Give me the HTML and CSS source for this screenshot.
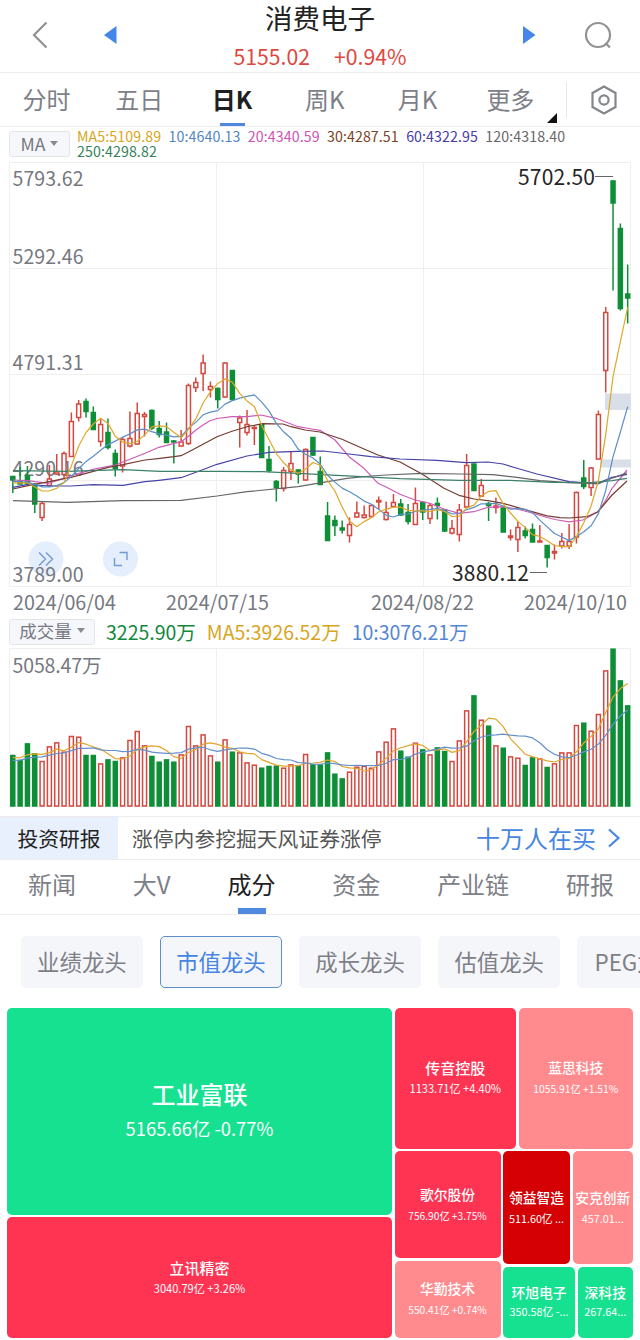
FILE: index.html
```html
<!DOCTYPE html>
<html lang="zh-CN">
<head>
    <meta charset="UTF-8">
    <meta name="viewport" content="width=device-width, initial-scale=1.0">
    <title>消费电子</title>
    <link rel="stylesheet" href="styles.css">
</head>
<body>
    <header class="header">
        <svg class="icon-back" width="20" height="30" viewBox="0 0 20 30"><path d="M16.500 2.500 4 15l12.500 12.500"/></svg>
        <svg class="icon-prev" width="14" height="20" viewBox="0 0 14 20"><path d="M13.500 1v18L1 10z"/></svg>
        <div class="header-title">
            <h1>消费电子</h1>
            <div class="quote"><span>5155.02</span><span>+0.94%</span></div>
        </div>
        <svg class="icon-next" width="14" height="20" viewBox="0 0 14 20"><path d="M0 1v18l12.500-9z"/></svg>
        <svg class="icon-search" width="30" height="30" viewBox="0 0 30 30"><circle cx="15" cy="15" r="12"/><path d="m22.500 23 4.500 4.500"/></svg>
    </header>

    <nav class="period-tabs">
        <a>分时</a>
        <a>五日</a>
        <a class="active">日K</a>
        <a>周K</a>
        <a>月K</a>
        <a class="more">更多</a>
        <div class="settings">
            <svg width="30" height="32" viewBox="0 0 30 32"><path d="M15 2.500 26.500 9v14L15 29.500 3.500 23V9z"/><circle cx="15" cy="16" r="4.600"/></svg>
        </div>
    </nav>

    <div class="ma-row">
        <button class="select">MA<i></i></button>
        <div class="ma-legend">
            <span class="ma5">MA5:5109.89</span>
            <span class="ma10">10:4640.13</span>
            <span class="ma20">20:4340.59</span>
            <span class="ma30">30:4287.51</span>
            <span class="ma60">60:4322.95</span>
            <span class="ma120">120:4318.40</span>
            <span class="ma250">250:4298.82</span>
        </div>
    </div>

    <svg class="chart" width="640" height="430" viewBox="0 160 640 430">
        <path class="grid" d="M9.500 162.500h621v424h-621zM9.500 268.500h621M9.500 374.500h621M9.500 480.500h621M216.500 162.500v424M423.500 162.500v424"/>
        <rect class="gap-zone" x="605" y="393.500" width="26" height="16.500"/>
        <rect class="gap-zone" x="600" y="459.500" width="31" height="8"/>
        <circle class="tool" cx="46" cy="559" r="17.500"/>
        <circle class="tool" cx="120.500" cy="559" r="17.500"/>
        <path class="tool-icon" d="m39 552.500 6.500 6.500-6.500 6.500m7-13 6.500 6.500-6.500 6.500M119.500 552.500h7.500v7.500M114.500 558v7.500h7.500"/>
        <g class="axis-label">
            <text x="12.500" y="185.500" textLength="71">5793.62</text>
            <text x="12.500" y="263.500" textLength="71">5292.46</text>
            <text x="12.500" y="369.500" textLength="71">4791.31</text>
            <text x="12.500" y="475.500" textLength="71">4290.16</text>
            <text x="12.500" y="581.500" textLength="71">3789.00</text>
        </g>
        <g id="candles"></g>
        <g id="maLines"></g>
        <g class="extreme">
            <text x="518" y="184.500" textLength="77">5702.50</text>
            <text x="452" y="580.500" textLength="77">3880.12</text>
            <path d="M595 176.500h18M530 572.500h17"/>
        </g>
    </svg>

    <div class="dates">
        <span>2024/06/04</span>
        <span>2024/07/15</span>
        <span>2024/08/22</span>
        <span>2024/10/10</span>
    </div>

    <div class="vol-row">
        <button class="select">成交量<i></i></button>
        <span class="vol-now">3225.90万</span>
        <span class="ma5">MA5:3926.52万</span>
        <span class="ma10">10:3076.21万</span>
    </div>

    <svg class="volume" width="640" height="169" viewBox="0 647 640 169">
        <path class="grid" d="M9.500 648.500h621v158h-621zM216.500 648.500v158M423.500 648.500v158"/>
        <g class="axis-label"><text x="12.500" y="672.500" textLength="89">5058.47万</text></g>
        <g id="volBars"></g>
        <g id="volLines"></g>
    </svg>

    <div class="report">
        <div class="report-tag">投资研报</div>
        <div class="report-text">涨停内参挖掘天风证券涨停</div>
        <div class="report-link">
            十万人在买
            <svg width="14" height="20" viewBox="0 0 14 20"><path d="m2 1.500 9.500 8.500L2 18.500"/></svg>
        </div>
    </div>

    <nav class="info-tabs">
        <a>新闻</a>
        <a>大V</a>
        <a class="active">成分</a>
        <a>资金</a>
        <a>产业链</a>
        <a>研报</a>
    </nav>

    <div class="chips">
        <div class="chip">业绩龙头</div>
        <div class="chip selected">市值龙头</div>
        <div class="chip">成长龙头</div>
        <div class="chip">估值龙头</div>
        <div class="chip">PEG龙头</div>
    </div>

    <div class="treemap">
        <div class="col col-left">
            <div class="tile green big"><b>工业富联</b><span>5165.66亿 -0.77%</span></div>
            <div class="tile red luxshare"><b>立讯精密</b><span>3040.79亿 +3.26%</span></div>
        </div>
        <div class="col col-right">
            <div class="row row-top">
                <div class="tile red chuanyin"><b>传音控股</b><span>1133.71亿 +4.40%</span></div>
                <div class="tile pink lansi"><b>蓝思科技</b><span>1055.91亿 +1.51%</span></div>
            </div>
            <div class="row row-bottom">
                <div class="col col-goer">
                    <div class="tile red goer"><b>歌尔股份</b><span>756.90亿 +3.75%</span></div>
                    <div class="tile pink huaqin"><b>华勤技术</b><span>550.41亿 +0.74%</span></div>
                </div>
                <div class="col col-rest">
                    <div class="row row-mid">
                        <div class="tile dark lingyi"><b>领益智造</b><span>511.60亿 ...</span></div>
                        <div class="tile pink anker"><b>安克创新</b><span>457.01...</span></div>
                    </div>
                    <div class="row row-last">
                        <div class="tile green huanxu"><b>环旭电子</b><span>350.58亿 -...</span></div>
                        <div class="tile green shenkeji"><b>深科技</b><span>267.64...</span></div>
                    </div>
                </div>
            </div>
        </div>
    </div>

    <script src="script.js"></script>
</body>
</html>
```

FILE: styles.css
```css
* {
    box-sizing: border-box;
}
body {
    width: 640px;
    height: 1340px;
    margin: 0;
    overflow: hidden;
    background: #fff;
    color: #222;
    font-family: "Noto Sans CJK SC", sans-serif;
}
svg {
    display: block;
    flex: none;
}
.header {
    height: 73px;
    display: flex;
    align-items: flex-start;
    padding: 0 27px 0 30px;
    border-bottom: 1px solid #ececee;
}
.icon-back, .icon-search {
    margin-top: 20px;
    fill: none;
    stroke: #929292;
    stroke-width: 2.2;
}
.icon-prev, .icon-next {
    margin-top: 25px;
    fill: #4586ea;
}
.icon-prev {
    margin-left: 53px;
}
.icon-search {
    margin-left: 46px;
}
.header-title {
    flex: 1;
    text-align: center;
}
.header-title h1 {
    margin: 0;
    font-size: 27.5px;
    font-weight: 400;
    line-height: 35px;
}
.quote {
    display: flex;
    justify-content: center;
    gap: 24px;
    color: #dd4840;
    font-size: 21.2px;
    line-height: 42px;
}
.period-tabs {
    height: 54px;
    display: flex;
    align-items: center;
    border-bottom: 1px solid #ececee;
    color: #7d8087;
    font-size: 24px;
}
.period-tabs a {
    position: relative;
    width: 92.8px;
    height: 53px;
    line-height: 51px;
    text-align: center;
}
.period-tabs .active {
    color: #1f1f1f;
    font-weight: 700;
}
.period-tabs .active::after {
    content: "";
    position: absolute;
    left: 34px;
    bottom: 0;
    width: 25px;
    height: 3px;
    background: #5089df;
}
.period-tabs .more::after {
    content: "";
    position: absolute;
    right: 0;
    bottom: 3px;
    border-left: 10px solid transparent;
    border-bottom: 10px solid #111;
}
.settings {
    height: 36px;
    margin-left: 9px;
    padding: 2px 0 0 22px;
    border-left: 1px solid #e6e6ea;
}
.settings svg {
    fill: none;
    stroke: #83868b;
    stroke-width: 2.2;
}
.ma-row {
    height: 33px;
    display: flex;
    padding: 2px 0 0 9px;
}
.select {
    display: flex;
    align-items: center;
    justify-content: center;
    gap: 5px;
    padding: 0 0 2px;
    border: 1px solid #e2e4ea;
    border-radius: 3px;
    background: #f6f7fb;
    color: #767983;
    font-family: inherit;
}
.select i {
    border: 4.5px solid transparent;
    border-top: 5px solid #888b93;
    border-bottom: 0;
}
.ma-row .select {
    width: 61px;
    height: 26px;
    margin-top: 2px;
    font-size: 17.5px;
}
.ma-legend {
    flex: 1;
    display: flex;
    flex-wrap: wrap;
    align-content: flex-start;
    gap: 0 7.3px;
    padding-left: 7px;
    font-size: 14.2px;
    letter-spacing: 0.1px;
    line-height: 14.5px;
}
.ma5 { color: #d9a521; }
.ma10 { color: #4f86c6; }
.ma20 { color: #cf53b4; }
.ma30 { color: #7b4327; }
.ma60 { color: #473ba6; }
.ma120 { color: #686868; }
.ma250 { color: #35835a; }
.grid {
    fill: none;
    stroke: #efeff0;
}
.gap-zone {
    fill: #d8dfe8;
}
.tool {
    fill: #e4eefc;
}
.tool-icon {
    fill: none;
    stroke: #6f9bd2;
    stroke-width: 1.4;
}
.axis-label {
    fill: #767880;
    font-size: 19.5px;
}
.extreme {
    fill: #262626;
    font-size: 21px;
}
.extreme path {
    stroke: #666;
}
.up {
    fill: #fff;
    stroke: #d5473f;
    stroke-width: 1.5;
}
.down {
    fill: #0e8f37;
    stroke: #0e8f37;
    stroke-width: 1.5;
}
.line {
    fill: none;
    stroke-width: 1.2;
    stroke-linejoin: round;
}
.dates {
    height: 26px;
    display: flex;
    padding-left: 13px;
    color: #767880;
    font-size: 19.7px;
    line-height: 24px;
}
.dates span {
    flex: none;
    width: 153px;
}
.dates span:nth-child(2) {
    width: 205px;
}
.dates span:last-child {
    width: auto;
}
.vol-row {
    height: 31px;
    display: flex;
    align-items: center;
    gap: 11px;
    padding-left: 9px;
    font-size: 19.5px;
    line-height: 31px;
}
.vol-row .select {
    width: 86px;
    height: 26px;
    font-size: 17.5px;
}
.vol-now {
    color: #12883d;
}
.vol-row .ma10 {
    color: #5586d2;
}
.report {
    height: 44px;
    display: flex;
    align-items: center;
    border-top: 1px solid #ececf0;
    border-bottom: 1px solid #ececf0;
    font-size: 20.8px;
    line-height: 42px;
}
.report-tag {
    width: 118px;
    background: #e7f0fc;
    text-align: center;
    color: #222;
}
.report-text {
    flex: 1;
    padding-left: 14px;
    color: #555;
}
.report-link {
    display: flex;
    align-items: center;
    gap: 11px;
    padding-right: 19px;
    color: #4785e2;
    font-size: 24px;
    line-height: 40px;
}
.report-link svg {
    fill: none;
    stroke: #4785e2;
    stroke-width: 2.2;
}
.info-tabs {
    height: 55px;
    display: flex;
    justify-content: space-between;
    padding: 0 26px 0 28px;
    border-bottom: 1px solid #ececef;
    color: #7d8087;
    font-size: 24px;
    line-height: 48px;
}
.info-tabs a {
    position: relative;
}
.info-tabs .active {
    color: #222;
}
.info-tabs .active::after {
    content: "";
    position: absolute;
    left: 11px;
    bottom: 0;
    width: 28px;
    height: 6px;
    background: #5089e0;
}
.chips {
    display: flex;
    gap: 17.3px;
    padding: 20.5px 0 20px 21px;
    overflow: hidden;
}
.chip {
    flex: none;
    width: 121.8px;
    height: 52px;
    border: 1px solid #f5f6fa;
    border-radius: 5px;
    background: #f5f6fa;
    color: #7d8087;
    font-size: 22.4px;
    line-height: 48px;
    text-align: center;
}
.chip.selected {
    border-color: #5a8fca;
    color: #4785e2;
}
.treemap {
    height: 330.5px;
    display: flex;
    gap: 2.5px;
    padding: 0 7px 0 7px;
}
.row, .col {
    display: flex;
    gap: 2.5px;
}
.col {
    flex-direction: column;
}
.col-left { width: 385px; }
.col-right { flex: 1; }
.row-top { height: 141px; }
.row-bottom { flex: 1; }
.col-goer { width: 106px; }
.col-rest { flex: 1; }
.row-mid { height: 113px; }
.row-last { flex: 1; }
.tile {
    flex: 1;
    display: flex;
    flex-direction: column;
    align-items: center;
    justify-content: center;
    min-width: 0;
    border-radius: 5px;
    color: #fff;
    font-size: 10.8px;
    line-height: 21px;
    white-space: nowrap;
    overflow: hidden;
}
.tile b {
    font-size: 13.8px;
    font-weight: 500;
}
.green { background: #16e191; }
.red { background: #ff3352; }
.pink { background: #ff8b8e; }
.dark { background: #d40003; }
.big {
    flex: none;
    height: 207px;
    font-size: 18.4px;
    line-height: 35px;
}
.big b {
    font-size: 24px;
}
.luxshare, .chuanyin {
    font-size: 11.1px;
}
.luxshare b, .chuanyin b {
    font-size: 15px;
}
.chuanyin { flex: none; width: 121.5px; }
.lansi { font-size: 10.3px; }
.goer { flex: none; height: 107px; font-size: 10.2px; }
.huaqin { font-size: 10.2px; }
.lingyi { flex: none; width: 67px; }
.huanxu { flex: none; width: 72px; }
.huanxu, .shenkeji { line-height: 19px; }
```

FILE: script.js
```javascript
// [direction, high, low, body top, body bottom] in chart units, one per trading day
const candles = [
    ['g', 476.5, 493, 476.5, 480], ['g', 467, 484, 481, 484], ['g', 466, 485, 476, 483.5], ['g', 483, 513, 484.5, 504],
    ['r', 501.5, 521, 503.5, 517.5], ['r', 465, 487, 479, 485.5], ['r', 454, 475, 472, 474], ['r', 451.5, 478, 453.5, 474.5],
    ['r', 412.5, 457, 421.5, 456.5], ['r', 400, 421.5, 404, 417.5], ['g', 398.5, 417.5, 401.5, 411.5], ['g', 406.5, 429.5, 412.5, 429.5],
    ['r', 418.5, 446.5, 424.5, 441.5], ['g', 418.5, 449.5, 432.5, 447.5], ['g', 449.5, 476.5, 453.5, 468.5], ['r', 437, 472.5, 439.5, 466],
    ['r', 411.5, 447.5, 438.5, 446], ['r', 402.5, 444.5, 413.5, 444], ['r', 412, 436.5, 414.5, 416.5], ['g', 409.5, 430, 410.5, 428],
    ['g', 421, 437.5, 428.5, 434.5], ['g', 422.5, 442.5, 432, 442.5], ['g', 440, 463.5, 441, 442], ['r', 430, 446.5, 442, 446],
    ['r', 383.5, 445, 385.5, 443.5], ['r', 377.5, 392, 382.5, 387.5], ['r', 354.5, 391, 363, 373.5], ['r', 381.5, 397.5, 386.5, 389.5],
    ['g', 387.5, 408.5, 388.5, 399.5], ['r', 362.5, 397.5, 363, 397], ['g', 370, 400, 370.5, 399.5], ['r', 415.5, 447.5, 418, 422.5],
    ['r', 410, 435.5, 424.5, 432.5], ['r', 425, 445, 427.5, 428.5], ['g', 424, 458, 424.5, 457.5], ['g', 446, 472.5, 459.5, 470.5],
    ['g', 480, 501.5, 481.5, 487.5], ['r', 467, 491.5, 470.5, 488.5], ['r', 451.5, 480, 463.5, 471.5], ['g', 469.5, 483.5, 470, 474],
    ['r', 448.5, 480.5, 449.5, 480], ['g', 437, 456, 437.5, 455], ['g', 456.5, 484.5, 471.5, 484.5], ['g', 502, 541, 516, 540.5],
    ['g', 515.5, 536, 520.5, 525.5], ['g', 520.5, 533.5, 528, 530], ['r', 517.5, 542.5, 524.5, 535.5], ['r', 501.5, 517.5, 513, 517],
    ['r', 505.5, 518.5, 515, 517.5], ['r', 504.5, 517.5, 505.5, 516.5], ['r', 496.5, 510, 500.5, 502], ['r', 501.5, 520.5, 512.5, 519.5],
    ['r', 494, 507.5, 502.5, 506.5], ['g', 499, 515.5, 504, 515], ['g', 504, 524.5, 512.5, 521.5], ['r', 487.5, 525, 503.5, 524.5],
    ['g', 501.5, 520, 502.5, 512], ['r', 503, 524, 505.5, 518.5], ['g', 497.5, 519.5, 503.5, 505.5], ['g', 509, 532, 510, 531],
    ['r', 520, 534.5, 528.5, 533], ['r', 504, 541.5, 510, 534.5], ['r', 454, 508, 465.5, 507], ['g', 463.5, 491, 464, 490.5],
    ['r', 479, 497, 485.5, 496], ['g', 502, 521, 503.5, 505.5], ['r', 497.5, 513.5, 506, 507.5], ['g', 507.5, 532, 508, 532],
    ['r', 529.5, 540.5, 536, 537.5], ['r', 521.5, 552, 527.5, 539.5], ['g', 526.5, 538.5, 531, 535.5], ['g', 523.5, 542, 529.5, 542],
    ['r', 525, 542, 541, 542], ['g', 545, 567.5, 545.5, 557.5], ['r', 544.5, 559.5, 551.5, 553], ['r', 533, 548.5, 541.5, 546],
    ['r', 524, 549, 541.5, 546], ['r', 491.5, 543.5, 492.5, 537], ['g', 460, 489, 478, 486.5], ['r', 467, 496, 468, 487.5],
    ['r', 410.5, 459.5, 414.5, 459], ['r', 307, 392.5, 312.5, 370.5], ['g', 180.5, 290.5, 181, 203], ['g', 223.5, 310.5, 228.5, 308.5],
    ['g', 264.5, 323.5, 294, 298]
];

const volumes = [
    51.7, 46.7, 63.3, 53.3, 45.7, 60.3, 64.3, 55, 70.7, 70, 51.7, 51.7, 43.3, 47.3, 45.7, 49.3, 66.7,
    75.7, 61.3, 50.7, 45, 47.3, 45, 52.3, 80.7, 61.3, 72.3, 51.3, 45, 67.3, 55, 54.3, 44.3, 42,
    39, 40.7, 41, 39, 42.3, 41, 52.7, 42.3, 42.3, 54.3, 33, 28.3, 35, 40, 41, 39, 55.3,
    65, 78.3, 56, 50, 64, 57.3, 52.3, 59.3, 55.7, 45.7, 66.3, 96.3, 111.3, 87, 81, 61.3, 59,
    50.3, 49, 41.7, 49.3, 48.3, 39.7, 43.3, 54.3, 54.3, 81.7, 84, 76, 92.7, 136.3, 158, 126.3, 101.3
];

// values of the nine days before the visible window
const priceHistory = [480, 480, 480, 480, 480, 483.5, 483.5, 483.5, 483.5];
const volumeHistory = [43, 43, 43, 43, 43, 48.3, 48.3, 48.3, 48.3];

// long averages start outside the window, so they come as points
const longAverages = [
    ['#cf5cb8', '13,480 28,480.7 35,481.7 49,483.3 64,478.3 79,473.3 93,469.3 115,465 130,459.3 145,453.3 159,447.3 181,441.7 188,436.7 196,430 203,425 210,420.7 217,418.5 232,416.7 247,416.7 261,415 276,418.3 291,424 298,426.7 312,429 320,430.3 335,440 349,456.7 364,468.3 378,483.3 386,487 400,494.3 415,500 430,503.3 444,509 459,513.3 474,511.7 488,507.3 503,506.7 517,509 532,513 547,517.5 555,519.5 569,521.8 583,520 598,511.7 605,501.7 612,488.3 627,470'],
    ['#753c32', '13,489 28,485.7 49,481.7 71,477.3 86,473.3 108,467.3 123,464.7 145,460 160,458.3 174,456.7 181,455.7 188,452.3 203,444.3 217,436.7 232,431.3 247,426.7 263,423.7 283,424 291,426.7 305,430 320,432 342,439.3 364,449 378,455 400,462 422,474 444,488.3 459,495.3 474,499 488,500.7 503,503.3 517,507.3 532,511.7 547,515.8 560,517.7 569,518 587,516.7 598,511.7 612,495 627,481'],
    ['#4643a8', '13,487.3 28,484.3 49,486 71,486 93,484.7 123,485.3 145,481.7 159,480.3 181,477.7 200,470.7 217,464.3 247,456 269,452.3 298,451.3 323,451 349,454 371,456.7 400,459 437,460.3 466,462.7 488,462 503,464 517,468.3 537,474 569,481.7 583,482.7 598,483.3 612,477.3 627,474.3'],
    ['#666', '13,500.7 67,502.3 123,500.7 181,500.3 217,496 247,491.7 298,486.7 347,478.3 371,476 386,475 422,473.3 460,474 493,474.7 517,477.3 540,480.7 569,482.7 598,484 612,478.3 627,472.7'],
    ['#3c8067', '13,470.7 67,471.3 123,469.7 160,471.3 220,471.3 263,471.7 298,473.3 342,475.7 400,478.7 459,480.3 510,480.3 553,482.3 591,482.7 612,480.7 627,478.3']
];

function xAt(i) {
    return 12.8 + i * 7.32;
}

function average(values, history, days) {
    const all = history.concat(values);
    return values.map((v, i) => {
        const end = i + history.length + 1;
        return all.slice(end - days, end).reduce((a, b) => a + b, 0) / days;
    });
}

function polyline(points, color) {
    return `<polyline class="line" stroke="${color}" points="${points}"/>`;
}

function toPoints(values, toY) {
    return values.map((v, i) => xAt(i).toFixed(1) + ',' + toY(v).toFixed(1)).join(' ');
}

document.getElementById('candles').innerHTML = candles.map(([dir, high, low, top, bottom], i) => {
    const x = xAt(i);
    const cls = dir === 'r' ? 'up' : 'down';
    return `<path class="${cls}" d="M${x} ${high}V${low}"/>` +
        `<rect class="${cls}" x="${x - 2}" y="${top}" width="4" height="${bottom - top}"/>`;
}).join('');

const closes = candles.map(c => c[0] === 'r' ? c[3] : c[4]);
document.getElementById('maLines').innerHTML =
    longAverages.map(([color, points]) => polyline(points, color)).join('') +
    polyline(toPoints(average(closes, priceHistory, 10), y => y), '#5b8fc7') +
    polyline(toPoints(average(closes, priceHistory, 5), y => y), '#dfa829');

const base = 806.5;
document.getElementById('volBars').innerHTML = volumes.map((v, i) => {
    const cls = candles[i][0] === 'r' ? 'up' : 'down';
    return `<rect class="${cls}" x="${xAt(i) - 2}" y="${base - v + 0.7}" width="4" height="${v - 1.2}"/>`;
}).join('');
document.getElementById('volLines').innerHTML =
    polyline(toPoints(average(volumes, volumeHistory, 5), v => base - v), '#e2a52c') +
    polyline(toPoints(average(volumes, volumeHistory, 10), v => base - v), '#6490cc');
```
